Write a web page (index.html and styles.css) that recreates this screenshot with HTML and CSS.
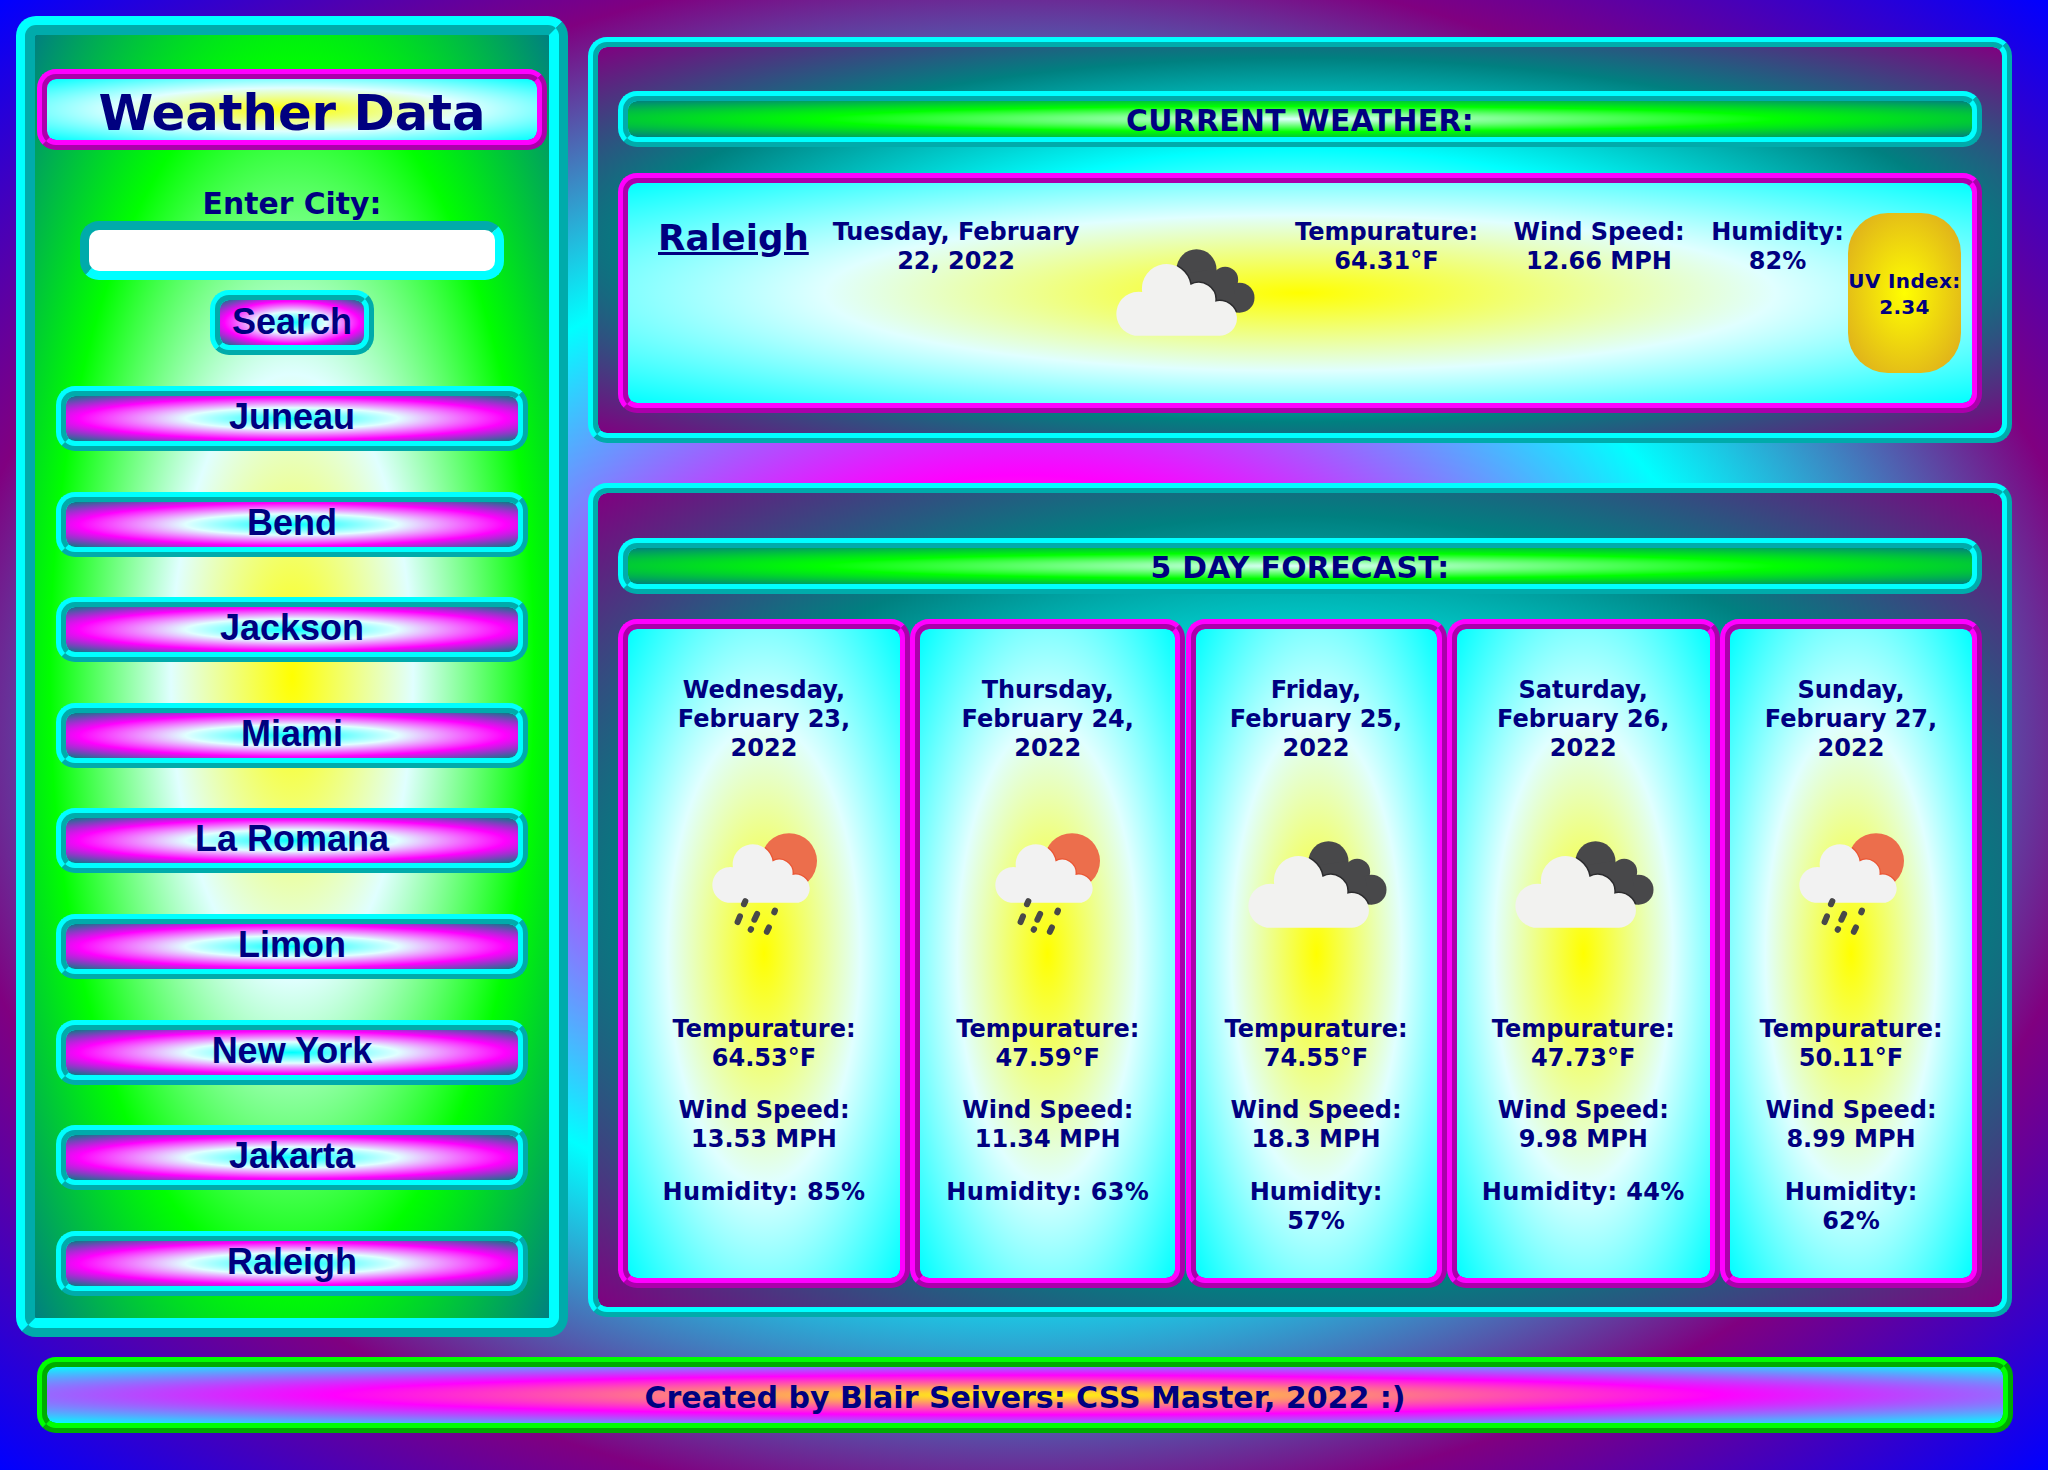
FILE: index.html
```html
<!DOCTYPE html>
<html lang="en">
<head>
<meta charset="utf-8">
<title>Weather Data</title>
<link rel="stylesheet" href="styles.css">
</head>
<body>
<svg class="defs" width="0" height="0" aria-hidden="true">
  <defs>
    <g id="cloud-back"><circle cx="291" cy="118" r="60"/><circle cx="377" cy="149" r="39"/><circle cx="420" cy="203" r="45"/><path d="M260 130L345 118L400 165L420 247L340 247L260 180Z"/></g>
    <path id="cloud-front" d="M106 317A66 66 0 1 1 128 186A73 73 0 1 1 273 165A50 50 0 0 1 347 215A52 52 0 1 1 355 317Z"/>
    <clipPath id="back-clip"><circle cx="291" cy="118" r="60"/><circle cx="377" cy="149" r="39"/><circle cx="420" cy="203" r="45"/><path d="M260 130L345 118L400 165L420 247L340 247L260 180Z"/></clipPath>
    <path id="rain-cloud" d="M113 277A53 53 0 1 1 128 171A59 59 0 1 1 246 154A40 40 0 0 1 305 194A42 42 0 1 1 314 277Z"/>
    <clipPath id="sun-clip"><circle cx="295" cy="153" r="83"/></clipPath>
    <symbol id="clouds" viewBox="50 57 416 261">
      <use href="#cloud-back" fill="#48484a"/>
      <use href="#cloud-front" fill="none" stroke="#2c2c2e" stroke-width="9" clip-path="url(#back-clip)"/>
      <use href="#cloud-front" fill="#f2f2f0"/>
    </symbol>
    <symbol id="rain" viewBox="66 70 312 302">
      <circle cx="295" cy="153" r="83" fill="#ec6e4c"/>
      <use href="#rain-cloud" fill="none" stroke="#ea5634" stroke-width="8" clip-path="url(#sun-clip)"/>
      <use href="#rain-cloud" fill="#f2f2f2"/>
      <path d="M165 272L161 281M149 317L142 334M200 310L192 327M253 300L251 305M182 355L181 357M235 350L229 363" fill="none" stroke="#48484a" stroke-width="18" stroke-linecap="round"/>
    </symbol>
  </defs>
</svg>
<div class="layout">
  <aside class="sidebar">
    <h1 class="title">Weather Data</h1>
    <form class="search">
      <label class="search-label" for="city">Enter City:</label>
      <input class="search-input" id="city" type="text">
      <button class="btn search-btn" type="button">Search</button>
    </form>
    <div class="history">
      <button class="btn">Juneau</button>
      <button class="btn">Bend</button>
      <button class="btn">Jackson</button>
      <button class="btn">Miami</button>
      <button class="btn">La Romana</button>
      <button class="btn">Limon</button>
      <button class="btn">New York</button>
      <button class="btn">Jakarta</button>
      <button class="btn">Raleigh</button>
    </div>
  </aside>
  <main class="content">
    <section class="panel">
      <h2 class="bar">CURRENT WEATHER:</h2>
      <div class="card current">
        <h3 class="city">Raleigh</h3>
        <p>Tuesday, February<br>22, 2022</p>
        <svg class="icon clouds"><use href="#clouds"/></svg>
        <p>Tempurature:<br>64.31°F</p>
        <p>Wind Speed:<br>12.66 MPH</p>
        <p class="humidity">Humidity:<br>82%</p>
        <p class="uv">UV Index:<br>2.34</p>
      </div>
    </section>
    <section class="panel forecast">
      <h2 class="bar">5 DAY FORECAST:</h2>
      <div class="days">
        <article class="card day">
          <p>Wednesday,<br>February 23,<br>2022</p>
          <div class="sky"><svg class="icon rain"><use href="#rain"/></svg></div>
          <p>Tempurature:<br>64.53°F</p>
          <p>Wind Speed:<br>13.53 MPH</p>
          <p class="wide">Humidity: 85%</p>
        </article>
        <article class="card day">
          <p>Thursday,<br>February 24,<br>2022</p>
          <div class="sky"><svg class="icon rain"><use href="#rain"/></svg></div>
          <p>Tempurature:<br>47.59°F</p>
          <p>Wind Speed:<br>11.34 MPH</p>
          <p class="wide">Humidity: 63%</p>
        </article>
        <article class="card day">
          <p>Friday,<br>February 25,<br>2022</p>
          <div class="sky"><svg class="icon clouds"><use href="#clouds"/></svg></div>
          <p>Tempurature:<br>74.55°F</p>
          <p>Wind Speed:<br>18.3 MPH</p>
          <p>Humidity:<br>57%</p>
        </article>
        <article class="card day">
          <p>Saturday,<br>February 26,<br>2022</p>
          <div class="sky"><svg class="icon clouds"><use href="#clouds"/></svg></div>
          <p>Tempurature:<br>47.73°F</p>
          <p>Wind Speed:<br>9.98 MPH</p>
          <p class="wide">Humidity: 44%</p>
        </article>
        <article class="card day">
          <p>Sunday,<br>February 27,<br>2022</p>
          <div class="sky"><svg class="icon rain"><use href="#rain"/></svg></div>
          <p>Tempurature:<br>50.11°F</p>
          <p>Wind Speed:<br>8.99 MPH</p>
          <p>Humidity:<br>62%</p>
        </article>
      </div>
    </section>
  </main>
</div>
<footer class="footer">Created by Blair Seivers: CSS Master, 2022 :)</footer>
</body>
</html>
```
FILE: styles.css
```css
* {
  box-sizing: border-box;
  margin: 0;
}

html {
  height: 100%;
}

body {
  height: 1470px;
  padding: 16px 36px 0 16px;
  overflow: hidden;
  font-family: Verdana, "DejaVu Sans", sans-serif;
  font-weight: bold;
  color: navy;
  text-align: center;
  background: radial-gradient(yellow, magenta, cyan, purple, blue) no-repeat;
}

.defs {
  position: absolute;
}

.layout {
  display: flex;
  gap: 20px;
  height: 1321px;
}

.sidebar {
  width: 552px;
  padding: 34px 2px 0;
  border: 19px ridge cyan;
  border-radius: 20px;
  background: radial-gradient(yellow, lightcyan, lime, teal);
}

.title {
  height: 81px;
  padding-top: 4px;
  border: 10px ridge magenta;
  border-radius: 19px;
  font-size: 49.7px;
  line-height: 61px;
  white-space: nowrap;
  background: radial-gradient(yellow, lightcyan, cyan);
}

.search {
  display: flex;
  flex-direction: column;
  align-items: center;
  padding-top: 36px;
}

.search-label {
  font-size: 29.8px;
  line-height: 35px;
}

.search-input {
  width: 424px;
  height: 59px;
  border: 9px inset cyan;
  border-radius: 19px;
  background: white;
}

.btn {
  height: 65px;
  padding: 0 0 3px;
  border: 10px ridge cyan;
  border-radius: 19px;
  font: bold 36px "Liberation Sans", Arial, sans-serif;
  color: navy;
  background: radial-gradient(cyan, lightcyan, magenta, teal);
}

.search-btn {
  width: 164px;
  margin-top: 10px;
  padding-bottom: 2px;
}

.history {
  display: flex;
  flex-direction: column;
  gap: 40.6px;
  padding: 31px 19px 0;
}

.content {
  display: flex;
  flex-direction: column;
  gap: 40px;
  width: 1424px;
  padding-top: 21px;
}

.panel {
  height: 406px;
  padding: 44px 20px 0;
  border: 10px ridge cyan;
  border-radius: 19px;
  background: radial-gradient(lightcyan, cyan, teal, purple);
}

.forecast {
  height: 834px;
  padding-top: 45px;
}

.bar {
  height: 56px;
  padding-top: 2px;
  border: 10px ridge cyan;
  border-radius: 19px;
  font-size: 29.8px;
  line-height: 35px;
  letter-spacing: 0.35px;
  background: radial-gradient(lightcyan, lime, teal);
}

.card {
  border: 10px ridge magenta;
  border-radius: 19px;
  font-size: 24px;
  line-height: 29px;
  background: radial-gradient(yellow, lightcyan, cyan);
}

.current {
  display: grid;
  grid-template-columns: 170px 256px 202px 201px 224px 137px 113px;
  height: 240px;
  margin-top: 26px;
  padding: 35px 0 0 30px;
}

.city {
  margin-top: -2px;
  font-size: 35.6px;
  line-height: 44px;
  text-align: left;
  text-decoration: underline;
}

.humidity {
  padding-right: 4px;
}

.icon {
  display: block;
  margin: 0 auto;
}

.clouds {
  width: 139px;
  height: 87px;
}

.rain {
  width: 105px;
  height: 102px;
}

.current .clouds {
  margin-top: 31px;
}

.uv {
  height: 160px;
  margin-top: -5px;
  padding-top: 55px;
  border-radius: 40px;
  font-size: 20px;
  line-height: 26px;
  letter-spacing: 0.35px;
  white-space: nowrap;
  background: radial-gradient(yellow, goldenrod);
}

.days {
  display: grid;
  grid-template-columns: 292px 275px 261px 273px 262px;
  justify-content: space-between;
  height: 669px;
  margin-top: 25px;
}

.day {
  display: flex;
  flex-direction: column;
  gap: 23.5px;
  padding-top: 46.5px;
}

.wide {
  letter-spacing: 0.35px;
}

.sky {
  display: flex;
  align-items: center;
  height: 205px;
  padding-bottom: 9px;
}

.day .clouds {
  padding-left: 2px;
  width: 141px;
}

.footer {
  width: 1976px;
  height: 76px;
  margin: 20px 0 0 21px;
  padding-top: 3px;
  border: 10px ridge lime;
  border-radius: 19px;
  font-size: 30px;
  line-height: 56px;
  background: radial-gradient(yellow, magenta, cyan);
}
```
